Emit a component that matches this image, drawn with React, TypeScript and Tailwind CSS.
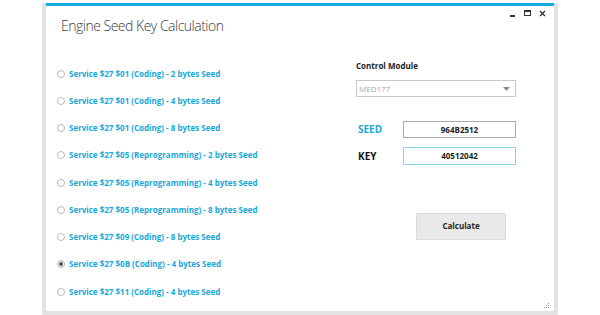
const services = [
  'Service $27 $01 (Coding) - 2 bytes Seed',
  'Service $27 $01 (Coding) - 4 bytes Seed',
  'Service $27 $01 (Coding) - 8 bytes Seed',
  'Service $27 $05 (Reprogramming) - 2 bytes Seed',
  'Service $27 $05 (Reprogramming) - 4 bytes Seed',
  'Service $27 $05 (Reprogramming) - 8 bytes Seed',
  'Service $27 $09 (Coding) - 8 bytes Seed',
  'Service $27 $0B (Coding) - 4 bytes Seed',
  'Service $27 $11 (Coding) - 4 bytes Seed',
];

const selected = 7;

export default function App() {
  return (
    <div
      className="w-[600px] h-[315px] bg-white pt-[3px] pl-[42px] overflow-hidden"
      style={{ fontFamily: '"Open Sans", sans-serif' }}>
      <div className="relative w-[516px] h-[312px] border-x-4 border-b-4 border-[#e3e3e3] flex flex-col">
        {/* accent strip */}
        <div className="h-[3px] shrink-0 bg-[#14abde]" />

        {/* title bar */}
        <div className="h-[54px] shrink-0 flex justify-between items-start">
          <h1 className="pl-[15px] pt-[11px] text-[14px] leading-[18px] font-light tracking-[-0.5px] text-[#3c3c3c]">
            Engine Seed Key Calculation
          </h1>
          <div className="flex items-center gap-[8px] pr-[8px] pt-[3px] text-[#333]">
            <span className="w-[6px] h-[8px] flex items-end">
              <span className="w-[5px] h-[2px] bg-[#333]" />
            </span>
            <span className="w-[7px] h-[6px] border border-[#333] border-t-2" />
            <svg width="7" height="7" viewBox="0 0 7 7">
              <path d="M1 1L6 6M6 1L1 6" stroke="#333" strokeWidth="1.3" />
            </svg>
          </div>
        </div>

        {/* body */}
        <div className="flex shrink-0">
          {/* service list */}
          <div className="w-[309px] pl-[11px] flex flex-col">
            {services.map((label, i) => (
              <div key={label} className="h-[27.25px] flex items-center gap-[4px]">
                <span className="w-[8px] h-[8px] rounded-full border border-[#b8b8b8] flex items-center justify-center">
                  {i === selected && <span className="w-[4px] h-[4px] rounded-full bg-[#555]" />}
                </span>
                <span className="text-[8px] font-bold text-[#1aa7d9]">{label}</span>
              </div>
            ))}
          </div>

          {/* module + keys */}
          <div className="w-[161px] pl-[1px] flex flex-col">
            <div className="text-[8px] leading-[12px] font-bold text-[#222]">Control Module</div>
            <div className="mt-[8px] h-[17px] border border-[#c8c8c8] flex items-center justify-between pl-[2px] pr-[5px]">
              <span className="text-[8px] text-[#a8a8a8]">MED177</span>
              <svg width="7" height="4" viewBox="0 0 7 4">
                <path d="M0 0H7L3.5 4Z" fill="#8a8a8a" />
              </svg>
            </div>

            <div className="mt-[24px] flex items-center">
              <span className="w-[47px] pl-[2px] text-[10px] font-bold text-[#1aa7d9]">SEED</span>
              <div className="flex-1 h-[17px] border border-[#a9a9a9] flex items-center justify-center text-[8px] font-bold text-[#222]">
                964B2512
              </div>
            </div>
            <div className="mt-[9px] flex items-center">
              <span className="w-[47px] pl-[2px] text-[10px] font-bold text-[#111]">KEY</span>
              <div className="flex-1 h-[18px] border border-[#86d3ee] flex items-center justify-center text-[8px] font-bold text-[#222]">
                40512042
              </div>
            </div>

            <div className="mt-[46px] pl-[60px]">
              <button className="w-[90px] h-[27px] bg-[#e9e9e9] border border-[#dcdcdc] text-[8px] font-bold text-[#222]">
                Calculate
              </button>
            </div>
          </div>
        </div>

        {/* resize grip */}
        <svg className="absolute right-[4px] bottom-[2px]" width="6" height="6" viewBox="0 0 6 6">
          <rect x="4" y="0" width="1" height="1" fill="#999" />
          <rect x="2" y="2" width="1" height="1" fill="#999" />
          <rect x="4" y="2" width="1" height="1" fill="#999" />
          <rect x="0" y="4" width="1" height="1" fill="#999" />
          <rect x="2" y="4" width="1" height="1" fill="#999" />
          <rect x="4" y="4" width="1" height="1" fill="#999" />
        </svg>
      </div>
    </div>
  );
}
